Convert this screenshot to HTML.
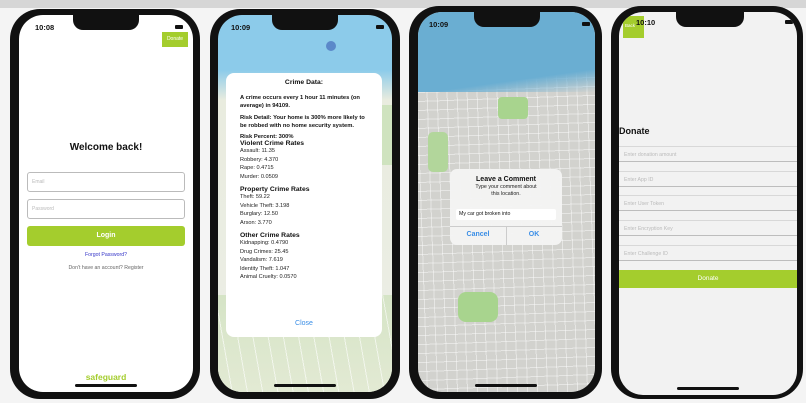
<!DOCTYPE html>
<html><head><style>
*{margin:0;padding:0;box-sizing:border-box}
body{width:806px;height:403px;overflow:hidden;background:#f4f4f4;font-family:"Liberation Sans",sans-serif;position:relative}
.abs{position:absolute}
.frame{position:absolute;background:#111;border-radius:30px}
.scr{position:absolute;border-radius:24px;overflow:hidden}
.notch{position:absolute;top:0;width:66px;height:15px;background:#111;border-radius:0 0 10px 10px}
.time{position:absolute;font-size:7.5px;font-weight:bold;color:#111}
.bar{position:absolute;bottom:5px;height:3px;width:62px;background:#111;border-radius:2px}
.bat{position:absolute;width:8px;height:4px;background:#111;border-radius:1px}
.m{font-size:5.6px;color:#222;line-height:8.5px}
.mb{font-weight:bold;font-size:5.8px;color:#111}
.h{font-weight:bold;font-size:6.8px;color:#111}
.in{position:absolute;left:0;right:0;height:16px;background:#f2f2f2;border-top:1px solid #d8d8d8;border-bottom:1px solid #bdbdbd;font-size:5.2px;color:#bbb;padding:5px 0 0 5px}
</style></head><body>
<div class="abs" style="left:0;top:0;width:806px;height:8px;background:#d6d6d6"></div>

<!-- Phone 1 -->
<div class="frame" style="left:10px;top:9px;width:190px;height:390px"></div>
<div class="scr" style="left:19px;top:15px;width:174px;height:377px;background:#fff">
 <div class="notch" style="left:54px"></div>
 <div class="time" style="left:16px;top:8px">10:08</div>
 <div class="bat" style="left:156px;top:10px"></div>
 <div class="abs" style="left:143px;top:17px;width:26px;height:15px;background:#a4cd2d;color:#fff;font-size:5px;text-align:center;line-height:15px">Donate</div>
 <div class="abs" style="left:0;width:174px;top:127px;text-align:center;font-weight:bold;font-size:10px;color:#111">Welcome back!</div>
 <div class="abs" style="left:8px;top:157px;width:158px;height:20px;border:1px solid #bbb;border-radius:3px;font-size:5px;color:#bbb;padding:6px 4px">Email</div>
 <div class="abs" style="left:8px;top:184px;width:158px;height:20px;border:1px solid #bbb;border-radius:3px;font-size:5px;color:#bbb;padding:6px 4px">Password</div>
 <div class="abs" style="left:8px;top:211px;width:158px;height:20px;background:#a4cd2d;border-radius:3px;color:#fff;font-weight:bold;font-size:7px;text-align:center;line-height:20px">Login</div>
 <div class="abs" style="left:0;width:174px;top:237px;text-align:center;font-size:5.2px;color:#3535c8">Forgot Password?</div>
 <div class="abs" style="left:0;width:174px;top:250px;text-align:center;font-size:5.2px;color:#666">Don't have an account? Register</div>
 <div class="abs" style="left:0;width:174px;top:357px;text-align:center;font-size:8.5px;font-weight:bold;color:#a4cd2d">safeguard</div>
 <div class="bar" style="left:56px"></div>
</div>

<!-- Phone 2 -->
<div class="frame" style="left:210px;top:9px;width:190px;height:390px"></div>
<div class="scr" style="left:218px;top:15px;width:174px;height:377px;background:linear-gradient(#8ccbea 0,#8ccbea 55px,#e9ecdf 85px,#eceee6 100%)">
 <div class="abs" style="left:0;top:280px;width:174px;height:100px;background:repeating-linear-gradient(80deg,transparent 0 14px,rgba(255,255,255,.6) 14px 15px),linear-gradient(#d5e4c6,#e3ead4)"></div>
 <div class="abs" style="left:150px;top:90px;width:24px;height:60px;background:#cfe3bf"></div>
 <div class="notch" style="left:54px"></div>
 <div class="time" style="left:13px;top:8px">10:09</div>
 <div class="bat" style="left:158px;top:10px"></div>
 <div class="abs" style="left:108px;top:26px;width:10px;height:10px;border-radius:50%;background:#5b88c9"></div>
 <div class="abs" style="left:8px;top:58px;width:156px;height:264px;background:#fff;border-radius:8px;padding:6px 14px">
  <div style="text-align:center" class="h">Crime Data:</div>
  <div class="mb" style="margin-top:8px;line-height:8px">A crime occurs every 1 hour 11 minutes (on average) in 94109.</div>
  <div class="mb" style="margin-top:4px;line-height:8px">Risk Detail: Your home is 300% more likely to be robbed with no home security system.</div>
  <div class="mb" style="margin-top:4px">Risk Percent: 300%</div>
  <div class="h">Violent Crime Rates</div>
  <div class="m">Assault: 11.35<br>Robbery: 4.370<br>Rape: 0.4715<br>Murder: 0.0509</div>
  <div class="h" style="margin-top:5px">Property Crime Rates</div>
  <div class="m">Theft: 59.22<br>Vehicle Theft: 3.198<br>Burglary: 12.50<br>Arson: 3.770</div>
  <div class="h" style="margin-top:5px">Other Crime Rates</div>
  <div class="m">Kidnapping: 0.4790<br>Drug Crimes: 25.45<br>Vandalism: 7.619<br>Identity Theft: 1.047<br>Animal Cruelty: 0.0570</div>
  <div class="abs" style="left:0;width:156px;top:247px;text-align:center;font-size:7px;color:#3a8ee6">Close</div>
 </div>
 <div class="bar" style="left:56px"></div>
</div>

<!-- Phone 3 -->
<div class="frame" style="left:409px;top:6px;width:193px;height:393px"></div>
<div class="scr" style="left:418px;top:12px;width:177px;height:380px;background:repeating-linear-gradient(88deg,transparent 0 9px,rgba(255,255,255,.45) 9px 10px),repeating-linear-gradient(-2deg,transparent 0 8px,rgba(255,255,255,.45) 8px 9px),#d2d2ce">
 <div class="abs" style="left:0;top:0;width:177px;height:80px;background:linear-gradient(172deg,#6aaed2 0,#6aaed2 78%,rgba(106,174,210,0) 100%)"></div>
 <div class="abs" style="left:80px;top:85px;width:30px;height:22px;background:#a8d48e;border-radius:4px"></div>
 <div class="abs" style="left:40px;top:280px;width:40px;height:30px;background:#a8d48e;border-radius:8px"></div>
 <div class="abs" style="left:10px;top:120px;width:20px;height:40px;background:#b2d69b;border-radius:5px"></div>
 <div class="notch" style="left:56px"></div>
 <div class="time" style="left:11px;top:8px">10:09</div>
 <div class="bat" style="left:164px;top:10px"></div>
 <div class="abs" style="left:32px;top:157px;width:112px;height:76px;background:rgba(244,244,244,.96);border-radius:7px;text-align:center">
  <div style="font-weight:bold;font-size:7px;color:#111;margin-top:7px">Leave a Comment</div>
  <div style="font-size:5.3px;color:#222;line-height:7px;margin-top:1px">Type your comment about<br>this location.</div>
  <div class="abs" style="left:6px;top:40px;width:100px;height:11px;background:#fff;border-radius:2px;font-size:5.2px;text-align:left;padding:2px 3px;color:#111">My car got broken into</div>
  <div class="abs" style="left:0;top:57px;width:112px;height:1px;background:#ccc"></div>
  <div class="abs" style="left:56px;top:57px;width:1px;height:19px;background:#ccc"></div>
  <div class="abs" style="left:0;top:62px;width:56px;font-size:7px;color:#3a8ee6;font-weight:bold">Cancel</div>
  <div class="abs" style="left:56px;top:62px;width:56px;font-size:7px;color:#3a8ee6;font-weight:bold">OK</div>
 </div>
 <div class="bar" style="left:57px"></div>
</div>

<!-- Phone 4 -->
<div class="frame" style="left:611px;top:6px;width:192px;height:393px"></div>
<div class="scr" style="left:619px;top:12px;width:178px;height:383px;background:#f2f2f2">
 <div class="abs" style="left:4px;top:4px;width:21px;height:22px;background:#a4cd2d;color:#fff;font-size:4.5px;padding:7px 0 0 2px">Back</div>
 <div class="notch" style="left:57px;width:68px"></div>
 <div class="time" style="left:17px;top:6px">10:10</div>
 <div class="bat" style="left:166px;top:8px"></div>
 <div class="abs" style="left:0;top:114px;font-weight:bold;font-size:9px;color:#111">Donate</div>
 <div class="in" style="top:134px">Enter donation amount</div>
 <div class="in" style="top:159px">Enter App ID</div>
 <div class="in" style="top:183px">Enter User Token</div>
 <div class="in" style="top:208px">Enter Encryption Key</div>
 <div class="in" style="top:233px">Enter Challenge ID</div>
 <div class="abs" style="left:0;top:258px;width:178px;height:18px;background:#a4cd2d;color:#fff;font-size:6.5px;text-align:center;line-height:18px">Donate</div>
 <div class="bar" style="left:58px"></div>
</div>
</body></html>
